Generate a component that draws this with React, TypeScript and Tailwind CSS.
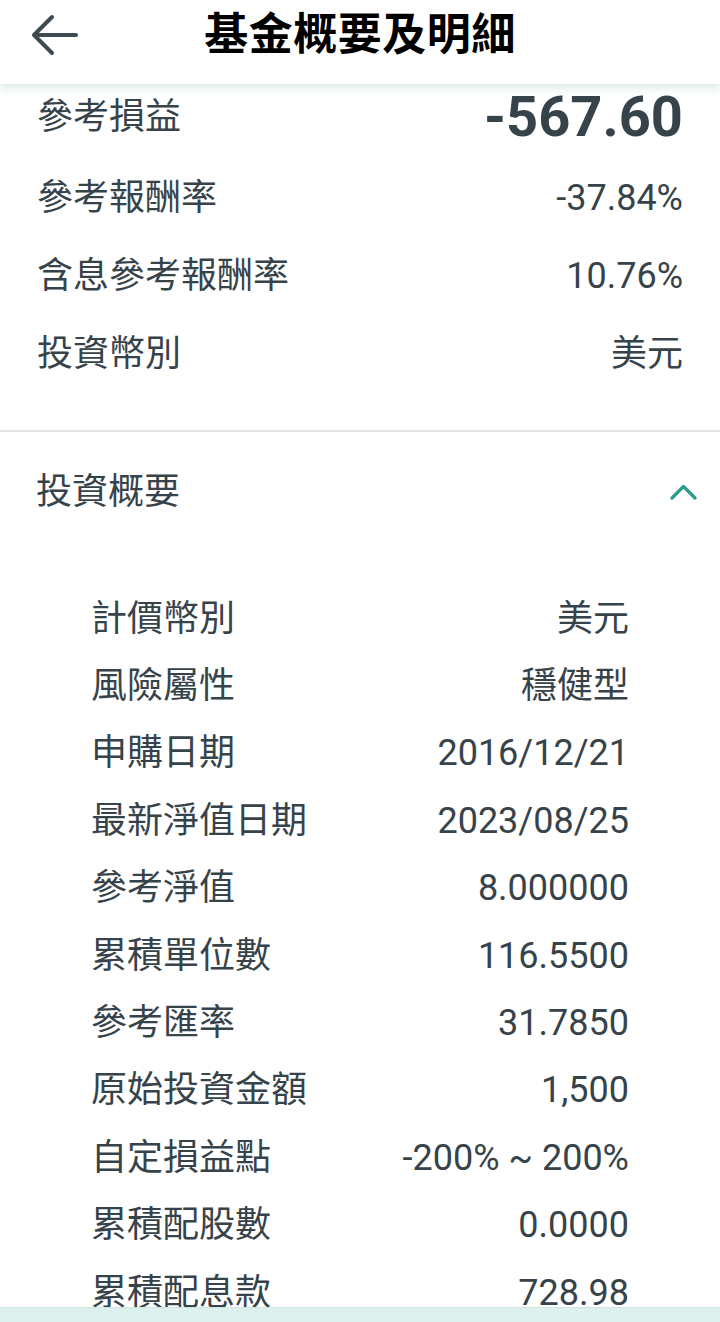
import React from "react";

const font = { fontFamily: "Roboto, 'Noto Sans CJK TC', sans-serif" };

const topRows: [string, string][] = [
  ["參考報酬率", "-37.84%"],
  ["含息參考報酬率", "10.76%"],
  ["投資幣別", "美元"],
];

const details: [string, string][] = [
  ["計價幣別", "美元"],
  ["風險屬性", "穩健型"],
  ["申購日期", "2016/12/21"],
  ["最新淨值日期", "2023/08/25"],
  ["參考淨值", "8.000000"],
  ["累積單位數", "116.5500"],
  ["參考匯率", "31.7850"],
  ["原始投資金額", "1,500"],
  ["自定損益點", "-200% ~ 200%"],
  ["累積配股數", "0.0000"],
  ["累積配息款", "728.98"],
];

export default function App() {
  return (
    <div
      className="relative w-[720px] h-[1322px] overflow-hidden bg-white text-[#37434a]"
      style={font}
    >
      <header className="relative z-10 h-[84px] bg-white shadow-[0_4px_8px_rgba(60,130,130,0.18)]">
        <div className="relative flex h-[70px] items-center justify-center">
          <svg
            className="absolute left-[30px] top-[13px]"
            width="50"
            height="44"
            viewBox="0 0 50 44"
            fill="none"
            stroke="#3d4a52"
            strokeWidth="4"
            strokeLinecap="round"
            strokeLinejoin="round"
          >
            <path d="M46 22H5" />
            <path d="M22 4L4 22l18 18" />
          </svg>
          <h1 className="text-[44px] font-semibold leading-none text-black tracking-[0.5px]">
            基金概要及明細
          </h1>
        </div>
      </header>

      <div className="px-[37px]">
        <div className="flex h-[75px] items-center justify-between pb-[9px]">
          <span className="text-[36px] leading-none">參考損益</span>
          <span className="text-[56px] font-bold leading-none">-567.60</span>
        </div>
        {topRows.map(([l, v]) => (
          <div key={l} className="flex h-[78px] items-center justify-between">
            <span className="text-[36px] leading-none">{l}</span>
            <span className="text-[36px] leading-none">{v}</span>
          </div>
        ))}
      </div>

      <div className="mt-[37px] h-[2px] bg-[#dde2e5]" />

      <div className="flex h-[120px] items-center justify-between pl-[36px] pr-[23px]">
        <span className="text-[36px] leading-none">投資概要</span>
        <svg
          width="27"
          height="16"
          viewBox="0 0 27 16"
          fill="none"
          stroke="#2e9a8e"
          strokeWidth="3.2"
          strokeLinecap="round"
          strokeLinejoin="round"
        >
          <path d="M2 14L13.5 2.5 25 14" />
        </svg>
      </div>

      <div className="pt-[33px] pl-[91px] pr-[91px]">
        {details.map(([l, v]) => (
          <div key={l} className="flex h-[67.4px] items-center justify-between">
            <span className="text-[36px] leading-none">{l}</span>
            <span className="text-[36px] leading-none">{v}</span>
          </div>
        ))}
      </div>

      <div className="absolute bottom-0 left-0 right-0 h-[15px] border-t border-[#cfe3e0] bg-[#dcf1ee]" />
    </div>
  );
}
